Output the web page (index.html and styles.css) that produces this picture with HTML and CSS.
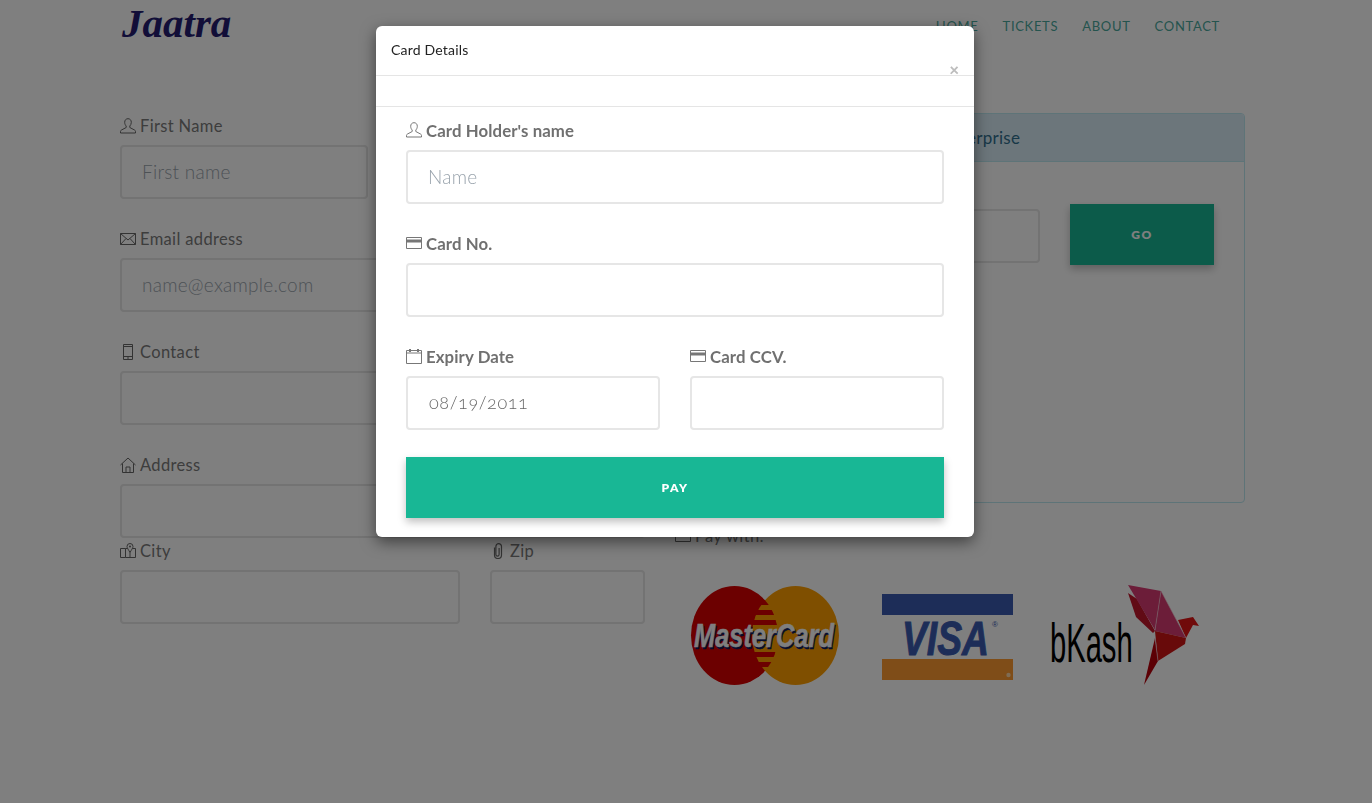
FILE: index.html
```html
<!DOCTYPE html>
<html lang="en">
<head>
<meta charset="utf-8">
<title>Jaatra</title>
<link rel="stylesheet" href="styles.css">
</head>
<body>
<svg class="defs" width="0" height="0" aria-hidden="true">
  <symbol id="i-user" viewBox="0 0 16 16"><path d="M8 .7C6 .7 4.700 2.100 4.700 4.300c0 1.500.6 2.900 1.500 3.700v1.500L1.500 12c-.7.400-1 .8-1 1.500v1.500h15v-1.500c0-.7-.3-1.100-1-1.500L9.800 9.500V8c.9-.8 1.500-2.200 1.500-3.700C11.300 2.100 10 .7 8 .7z" fill="none" stroke="currentColor"/></symbol>
  <symbol id="i-mail" viewBox="0 0 16 16"><path d="M.5 2.500h15v11H.5zM.5 2.500 8 9l7.500-6.500M.5 13.500l5.500-6M15.500 13.500l-5.500-6" fill="none" stroke="currentColor"/></symbol>
  <symbol id="i-phone" viewBox="0 0 16 16"><path d="M3.500.5h9v15h-9zM3.500 2.500h9M3.500 12.500h9M7 14h2" fill="none" stroke="currentColor"/></symbol>
  <symbol id="i-home" viewBox="0 0 16 16"><path d="M.5 8 8 1l7.500 7M2.500 6.500v9h11v-9M6 15.500V10h4v5.500" fill="none" stroke="currentColor"/></symbol>
  <symbol id="i-map" viewBox="0 0 16 16"><path d="M.5 5.500h5v9h-5zM5.500 5.500H7.500M12.500 5.500h3v9h-10M10 .5a3 3 0 0 1 3 3c0 1.500-1.700 3.500-3 6-1.300-2.500-3-4.500-3-6a3 3 0 0 1 3-3zM10 9.500v5" fill="none" stroke="currentColor"/><circle cx="10" cy="3.500" r="1" fill="currentColor"/></symbol>
  <symbol id="i-clip" viewBox="0 0 16 16"><path d="M4.500 4.500V12a3.500 3.500 0 0 0 7 0V3.500a2.800 2.800 0 0 0-5.600 0V11.500a1.600 1.600 0 0 0 3.200 0V5" fill="none" stroke="currentColor" stroke-width="1.200"/></symbol>
  <symbol id="i-card" viewBox="0 0 16 16"><path d="M.5 2.500h15v11H.5z" fill="none" stroke="currentColor"/><path d="M.5 4.500h15v3H.5z" fill="currentColor"/></symbol>
  <symbol id="i-cal" viewBox="0 0 16 16"><path d="M.5 2.500h15v13H.5zM.5 5h15" fill="none" stroke="currentColor"/><path d="M3 1h2v3H3zM11 1h2v3h-2z" fill="currentColor"/></symbol>
</svg>

<div class="page">
  <header class="topbar">
    <a class="logo">Jaatra</a>
    <nav class="nav">
      <a>HOME</a><a>TICKETS</a><a>ABOUT</a><a>CONTACT</a>
    </nav>
  </header>

  <main class="columns">
    <form class="col-left">
      <div class="row two">
        <div class="field"><label class="lab"><svg class="ico"><use href="#i-user"/></svg>First Name</label><input class="inp" placeholder="First name"></div>
        <div class="field"><label class="lab"></label><input class="inp"></div>
      </div>
      <div class="field"><label class="lab"><svg class="ico"><use href="#i-mail"/></svg>Email address</label><input class="inp" placeholder="name@example.com"></div>
      <div class="field"><label class="lab"><svg class="ico"><use href="#i-phone"/></svg>Contact</label><input class="inp"></div>
      <div class="field tight"><label class="lab"><svg class="ico"><use href="#i-home"/></svg>Address</label><input class="inp"></div>
      <div class="row city">
        <div class="field"><label class="lab"><svg class="ico"><use href="#i-map"/></svg>City</label><input class="inp"></div>
        <div class="field"><label class="lab"><svg class="ico"><use href="#i-clip"/></svg>Zip</label><input class="inp"></div>
      </div>
    </form>

    <section class="col-right">
      <div class="panel">
        <div class="panel-head">Enterprise</div>
        <div class="panel-body">
          <input class="inp promo">
          <button type="button" class="btn go">GO</button>
        </div>
      </div>
      <div class="pay-label"><svg class="ico"><use href="#i-card"/></svg>Pay with:</div>
      <div class="logos">
        <svg class="mc" viewBox="0 0 148 99" role="img" aria-label="MasterCard">
          <defs><clipPath id="mc-left"><ellipse cx="43.500" cy="49.500" rx="43.500" ry="49.500"/></clipPath></defs>
          <ellipse cx="43.500" cy="49.500" rx="43.500" ry="49.500" fill="#d90000"/>
          <ellipse cx="104.500" cy="49.500" rx="43.500" ry="49.500" fill="#ff9f00"/>
          <g clip-path="url(#mc-left)" fill="#d90000">
            <path d="M55 14h40v5H55zM55 24h40v5H55zM55 34h40v5H55zM55 66h40v5H55zM55 76h40v5H55zM55 86h40v5H55z"/>
          </g>
          <text class="mc-shadow" x="74" y="63" text-anchor="middle" textLength="140" lengthAdjust="spacingAndGlyphs">MasterCard</text>
          <text class="mc-text" x="73" y="61" text-anchor="middle" textLength="140" lengthAdjust="spacingAndGlyphs">MasterCard</text>
        </svg>
        <svg class="visa" viewBox="0 0 131 86" role="img" aria-label="VISA">
          <rect width="131" height="21" fill="#3a5bb0"/>
          <rect y="65" width="131" height="21" fill="#ff9a30"/>
          <circle cx="126.500" cy="81" r="2.200" fill="#ffd9a8"/>
          <text class="visa-text" x="20" y="61" textLength="87" lengthAdjust="spacingAndGlyphs">VISA</text>
          <text class="visa-reg" x="110" y="33">®</text>
        </svg>
        <div class="bkash">
          <span class="bkash-word">bKash</span>
          <svg class="bird" viewBox="0 0 72 100" aria-hidden="true">
            <path d="M0 8 9 14 27 46 25 48 8 32z" fill="#c2162b"/>
            <path d="M0 0 33 6 27 45z" fill="#d83a72"/>
            <path d="M33 6 58 53 27 46z" fill="#d83a72"/>
            <path d="M27 46 58 53 57 59 30 76z" fill="#d01414"/>
            <path d="M27 53 30 76 16 100z" fill="#b8000a"/>
            <path d="M50 35 65 32 71 41 65 40 58 53z" fill="#e01414"/>
            <path d="M33 6 27 45M33 6 58 53M27 53 30 76" fill="none" stroke="#f3c9d6" stroke-width=".6"/>
          </svg>
        </div>
      </div>
    </section>
  </main>
</div>

<div class="backdrop"></div>

<div class="modal">
  <div class="modal-head">
    <span class="modal-title">Card Details</span>
    <span class="close">×</span>
  </div>
  <div class="modal-gap"></div>
  <div class="modal-body">
    <div class="mfield"><label class="mlab"><svg class="ico"><use href="#i-user"/></svg>Card Holder's name</label><input class="inp" placeholder="Name"></div>
    <div class="mfield"><label class="mlab"><svg class="ico"><use href="#i-card"/></svg>Card No.</label><input class="inp"></div>
    <div class="mrow">
      <div class="mfield"><label class="mlab"><svg class="ico"><use href="#i-cal"/></svg>Expiry Date</label><input class="inp date" value="08/19/2011"></div>
      <div class="mfield"><label class="mlab"><svg class="ico"><use href="#i-card"/></svg>Card CCV.</label><input class="inp"></div>
    </div>
    <button type="button" class="btn pay">PAY</button>
  </div>
</div>
</body>
</html>
```

FILE: styles.css
```css
* { box-sizing: border-box; }
html, body { margin: 0; height: 100%; }
body {
  background: #fff;
  color: #555;
  font-family: "Lato", "Open Sans", sans-serif;
  font-size: 16px;
  overflow: hidden;
}
.defs { position: absolute; }

.page { width: 1125px; margin-left: 120px; }

.topbar {
  height: 113px;
  display: flex;
  justify-content: space-between;
  align-items: flex-start;
  padding-right: 25px;
}
.logo {
  font-family: "Liberation Serif", serif;
  font-weight: 700;
  font-style: italic;
  font-size: 41px;
  line-height: 46px;
  color: #241c70;
  margin: 0 0 0 2px;
}
.nav { display: flex; gap: 24px; padding-top: 18px; }
.nav a { font-size: 13px; line-height: 16px; letter-spacing: .7px; color: #4aa89c; }

.columns { display: flex; gap: 30px; }
.col-left { width: 525px; }
.col-right { width: 570px; }

.field { display: block; height: 113px; }
.field.tight { height: 86px; }
.lab {
  display: flex;
  align-items: center;
  height: 25px;
  margin-bottom: 7px;
  font-size: 16.500px;
  letter-spacing: .35px;
  color: #7a7a7a;
}
.ico { width: 16px; height: 16px; margin-right: 4px; flex: none; color: #666; }
.inp {
  display: block;
  width: 100%;
  height: 54px;
  border: 2px solid #e6e6e6;
  border-radius: 4px;
  background: #fff;
  padding: 0 20px 1px;
  font-family: inherit;
  font-size: 19px;
  letter-spacing: .25px;
  color: #666;
  outline: none;
}
.inp::placeholder { color: #9aa4ad; opacity: 1; font-weight: 300; }

.row { display: flex; gap: 30px; }
.two .field { width: 248px; }
.city .field:first-child { width: 340px; }
.city .field:last-child { width: 155px; }

.panel {
  height: 390px;
  border: 1px solid #bce8f1;
  border-radius: 4px;
  overflow: hidden;
}
.panel-head {
  height: 48px;
  background: #d9edf7;
  border-bottom: 1px solid #bce8f1;
  color: #31708f;
  font-size: 17px;
  letter-spacing: .3px;
  line-height: 47px;
  padding-left: 265px;
}
.panel-body {
  display: flex;
  align-items: flex-start;
  gap: 30px;
  padding: 42px 30px 0 15px;
}
.promo { width: 349px; margin-top: 5px; flex: none; }

.btn {
  display: block;
  border: 0;
  background: #18b795;
  color: #fff;
  font-family: inherit;
  font-weight: 800;
  font-size: 12px;
  letter-spacing: 1.500px;
  box-shadow: 0 4px 8px rgba(0,0,0,.25);
}
.go { width: 144px; height: 61px; flex: none; }

.pay-label {
  display: flex;
  align-items: center;
  height: 26px;
  margin-top: 20px;
  font-size: 16.500px;
  color: #7a7a7a;
  letter-spacing: .35px;
}
.logos {
  display: flex;
  align-items: flex-start;
  margin-top: 36px;
  padding-left: 16px;
}
.mc { width: 148px; height: 99px; flex: none; margin-top: 1px; overflow: visible; }
.mc-text, .mc-shadow {
  font-family: "Liberation Sans", sans-serif;
  font-weight: 700;
  font-style: italic;
  font-size: 33px;
}
.mc-text { fill: #fff; stroke: #fff; stroke-width: .5px; }
.mc-shadow { fill: #0c1a5c; stroke: #0c1a5c; stroke-width: .5px; }
.visa { width: 131px; height: 86px; flex: none; margin: 9px 0 0 43px; }
.visa-text {
  font-family: "Liberation Sans", sans-serif;
  font-weight: 700;
  font-style: italic;
  font-size: 48px;
  fill: #3a5bb0;
  stroke: #3a5bb0;
  stroke-width: 1px;
}
.visa-reg { font-family: "Liberation Sans", sans-serif; font-size: 8px; fill: #3a5bb0; }
.bkash { display: flex; align-items: flex-start; margin-left: 37px; }
.bkash-word {
  display: block;
  width: 78px;
  margin-top: 33px;
  font-family: "Liberation Sans", sans-serif;
  font-size: 55px;
  line-height: 50px;
  color: #000;
  white-space: nowrap;
  transform: scaleX(.53);
  transform-origin: left;
}
.bird { width: 72px; height: 100px; flex: none; }

.backdrop { position: fixed; inset: 0; background: rgba(0,0,0,.5); }

.modal {
  position: absolute;
  left: 376px;
  top: 26px;
  width: 598px;
  height: 511px;
  background: #fff;
  border-radius: 6px;
  box-shadow: 0 5px 15px rgba(0,0,0,.5);
  overflow: hidden;
}
.modal-head {
  height: 50px;
  display: flex;
  justify-content: space-between;
  align-items: flex-start;
  border-bottom: 1px solid #e5e5e5;
  padding: 15px 15px 0;
}
.modal-title { font-size: 14px; letter-spacing: .2px; line-height: 18px; color: #222; }
.close {
  font-weight: 900;
  font-size: 17px;
  line-height: 14px;
  color: #bdbdbd;
  margin-top: 22px;
}
.modal-gap { height: 31px; border-bottom: 1px solid #e5e5e5; }
.modal-body { padding: 11px 30px 0; }
.mfield { display: block; height: 113px; }
.mlab {
  display: flex;
  align-items: center;
  height: 26px;
  padding-bottom: 2px;
  margin-bottom: 6px;
  font-weight: 700;
  font-size: 16.800px;
  letter-spacing: .1px;
  color: #707070;
}
.mlab .ico { color: #777; }
.mrow { display: flex; gap: 30px; }
.mrow .mfield { width: 254px; }
.date { padding: 0 20px 3px 21px; font-weight: 300; font-size: 18px; font-variant-numeric: oldstyle-nums; letter-spacing: .6px; }
.pay { width: 100%; height: 61px; }
```
